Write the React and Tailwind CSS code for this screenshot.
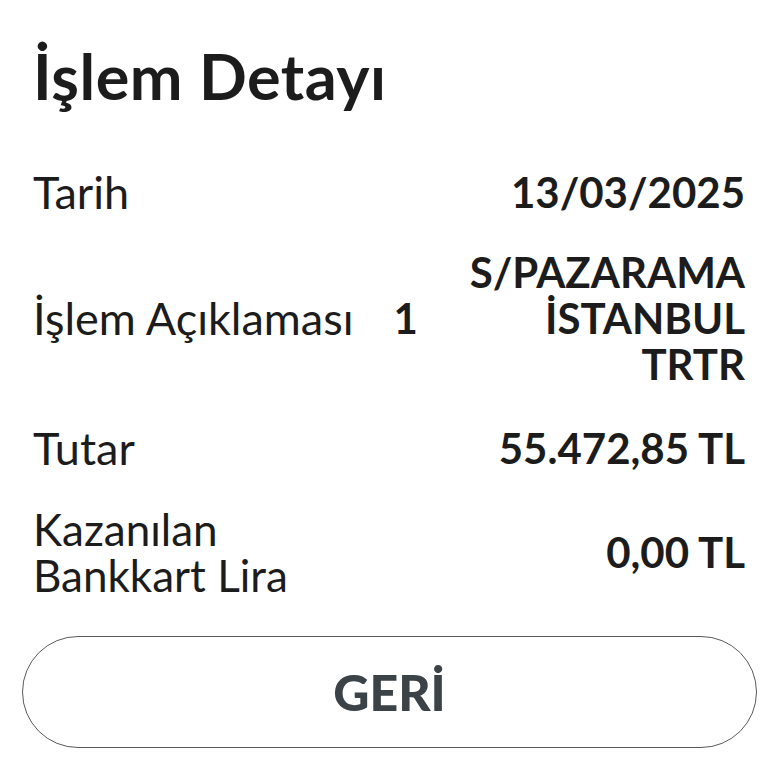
import React from "react";

const Row = ({ label, children, className = "" }) => (
  <div className={`flex items-center justify-between ${className}`}>
    {label}
    {children}
  </div>
);

export default function App() {
  return (
    <div
      className="w-[768px] h-[768px] bg-white overflow-hidden text-[#1c1c1c]"
      style={{ fontFamily: "Lato, 'Open Sans', sans-serif" }}
    >
      <div className="pl-[33px] pr-[23px] pt-[36px]">
        <h1 className="text-[63px] leading-[80px] font-bold tracking-[0.5px]">İşlem Detayı</h1>

        <Row
          className="mt-[53px]"
          label={<span className="text-[45px] leading-[46px]">Tarih</span>}
        >
          <span className="text-[42px] leading-[46px] font-bold">13/03/2025</span>
        </Row>

        <Row className="mt-[34px]" label={
          <div className="flex items-center">
            <span className="text-[45px] leading-[46px]">İşlem Açıklaması</span>
            <span className="text-[42px] leading-[46px] font-bold ml-[40px]">1</span>
          </div>
        }>
          <div className="text-[42px] leading-[46px] font-bold text-right w-[300px]">
            <div>S/PAZARAMA</div>
            <div>İSTANBUL</div>
            <div>TRTR</div>
          </div>
        </Row>

        <Row
          className="mt-[38px]"
          label={<span className="text-[45px] leading-[46px]">Tutar</span>}
        >
          <span className="text-[42px] leading-[46px] font-bold">55.472,85 TL</span>
        </Row>

        <Row
          className="mt-[35px]"
          label={
            <div className="text-[44px] leading-[46px]">
              <div>Kazanılan</div>
              <div>Bankkart Lira</div>
            </div>
          }
        >
          <span className="text-[42px] leading-[46px] font-bold">0,00 TL</span>
        </Row>
      </div>

      <div className="pl-[22px] pr-[11px] mt-[38px]">
        <button className="w-full h-[112px] rounded-full border-[1.5px] border-[#5a5a5a] flex items-center justify-center">
          <span className="text-[50px] font-black text-[#3b4248]">GERİ</span>
        </button>
      </div>
    </div>
  );
}
